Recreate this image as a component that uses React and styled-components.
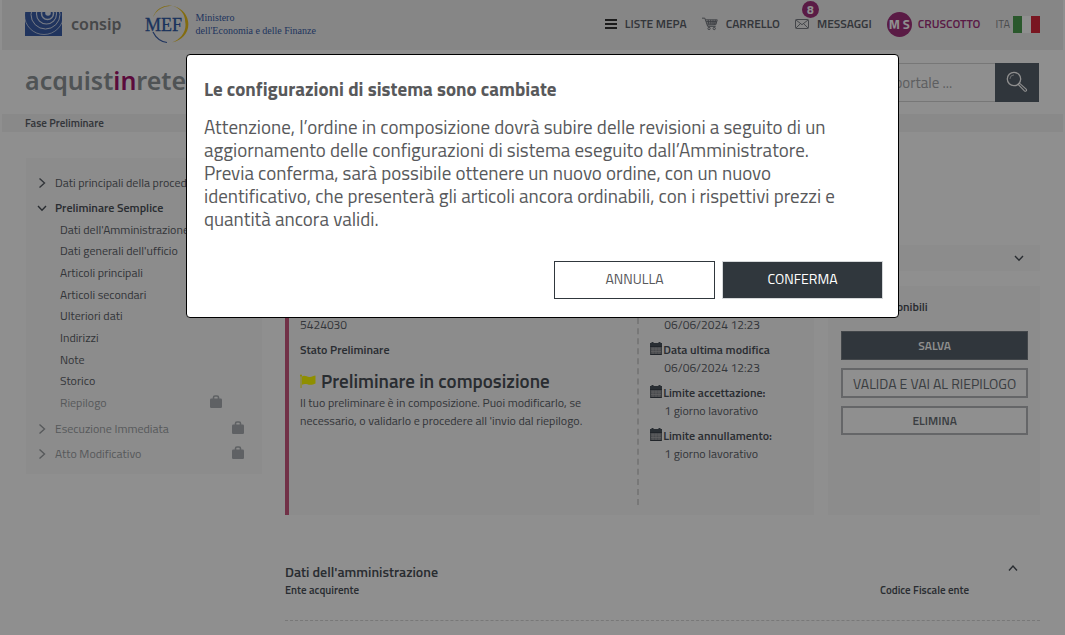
import styled, { createGlobalStyle } from 'styled-components';

const subItems = [
  { label: "Dati dell'Amministrazione" },
  { label: "Dati generali dell'ufficio" },
  { label: 'Articoli principali' },
  { label: 'Articoli secondari' },
  { label: 'Ulteriori dati' },
  { label: 'Indirizzi' },
  { label: 'Note' },
  { label: 'Storico' },
  { label: 'Riepilogo', locked: true },
];

const dates = [
  { label: 'Data creazione', value: '06/06/2024 12:23' },
  { label: 'Data ultima modifica', value: '06/06/2024 12:23' },
  { label: 'Limite accettazione:', value: '1 giorno lavorativo' },
  { label: 'Limite annullamento:', value: '1 giorno lavorativo' },
];

const message = [
  'Attenzione, l’ordine in composizione dovrà subire delle revisioni a seguito di un',
  'aggiornamento delle configurazioni di sistema eseguito dall’Amministratore.',
  'Previa conferma, sarà possibile ottenere un nuovo ordine, con un nuovo',
  'identificativo, che presenterà gli articoli ancora ordinabili, con i rispettivi prezzi e',
  'quantità ancora validi.',
];

const Chevron = ({ dir = 'right', size = 10 }) => {
  const paths = {
    right: 'M2.500 0.500l5 4.500-5 4.500',
    down: 'M1 3l4 4.200L9 3',
    up: 'M1 7.500l4-4.500 4 4.500',
  };
  return (
    <svg width={size} height={size} viewBox="0 0 10 10" fill="none" stroke="currentColor" strokeWidth="1.400" aria-hidden="true">
      <path d={paths[dir]} />
    </svg>
  );
};

const LockIcon = () => (
  <svg width="12" height="13" viewBox="0 0 12 13" aria-hidden="true">
    <path d="M3.500 4.500V2.600Q3.500 1 5 1h2q1.500 0 1.500 1.600v1.900" fill="none" stroke="#a9adb2" strokeWidth="1.600" />
    <rect x="0" y="3.600" width="12" height="9.400" rx="1.200" fill="#a9adb2" />
  </svg>
);

const CalendarIcon = () => (
  <svg width="12" height="13" viewBox="0 0 12 13" aria-hidden="true">
    <path d="M0 1h1.500V0h2v1h5V0h2v1H12v3H0z" fill="#4a525b" />
    <rect y="4" width="12" height="9" fill="#80858b" />
    <path d="M0 4.500h12M0 12.500h12" stroke="#3c434b" />
    <path d="M1 7h10M1 9.500h10M3 5.500v6.500M6 5.500v6.500M9 5.500v6.500" stroke="#b5b5b5" strokeWidth="0.600" />
    <path d="M.4 5v8M11.600 5v8" stroke="#5f646a" strokeWidth="0.800" />
  </svg>
);

const FlagIcon = () => (
  <svg width="16" height="14" viewBox="0 0 16 14" aria-hidden="true">
    <circle cx="1" cy="1.500" r="1" fill="#f8f200" />
    <path d="M.6 2h.9v12H.6z" fill="#f8f200" />
    <path d="M2 2.400c3-1.800 5 .9 8 .5 2-.2 3.500-1 5.500-1.400v8c-2 .9-3.500 1.300-5.500 1.200-3-.2-5-1.800-8 .1z" fill="#ffff00" />
  </svg>
);

const CartIcon = () => (
  <svg width="16" height="14" viewBox="0 0 17 14" fill="none" stroke="#6c7078" strokeWidth="1" aria-hidden="true">
    <path d="M0 .8h3L6 9.500h8.500M3.700 2.600h12.500L14.700 7.700 5.400 8M4.400 4.300h11.200M4.900 6h10.200M6.500 2.600l.9 5.300M9.200 2.600l.3 5.300M11.700 2.600v5.200M14.200 2.600l-.8 5.200" />
    <circle cx="7.500" cy="11.800" r="1.200" />
    <circle cx="13" cy="11.800" r="1.200" />
  </svg>
);

const MailIcon = () => (
  <svg width="14" height="10" viewBox="0 0 14 10" fill="none" stroke="#6c7078" strokeWidth="0.900" aria-hidden="true">
    <rect x=".5" y=".5" width="13" height="9" rx=".8" />
    <path d="M1 1l6 4.700L13 1M1 9l4.400-4.300M13 9L8.600 4.700" />
  </svg>
);

const SearchIcon = () => (
  <svg width="22" height="22" viewBox="0 0 22 22" fill="none" stroke="#fff" strokeWidth="1.300" aria-hidden="true">
    <circle cx="8" cy="8" r="6.700" />
    <path d="M3.900 8A4.200 4.200 0 0 1 8 3.900" strokeWidth=".6" />
    <path d="M12.200 13.500l1.300-1.300 6.600 6q.9 1 .1 1.700-.8.800-1.800 0z" strokeWidth="1.100" />
  </svg>
);

const ConsipMark = () => (
  <svg width="37" height="24" viewBox="0 0 37 24" aria-hidden="true">
    <defs>
      <clipPath id="consip-box"><rect width="37" height="24" /></clipPath>
    </defs>
    <rect width="37" height="24" fill="#3a5ea8" />
    <g clipPath="url(#consip-box)" fill="none" stroke="#d3dbec">
      <circle cx="23" cy="1" r="2.800" fill="#e4e9f4" stroke="none" />
      <circle cx="22.500" cy="1.500" r="6" strokeWidth="1.500" />
      <circle cx="21.500" cy="2" r="10" strokeWidth="1.100" />
      <circle cx="20.500" cy="2.500" r="14.500" strokeWidth="1" />
      <circle cx="19" cy="3" r="19.500" strokeWidth=".8" />
    </g>
  </svg>
);

const MefMark = () => (
  <svg width="44" height="40" viewBox="0 0 44 40" aria-hidden="true">
    <path d="M8 13.500A18.300 18.300 0 0 1 43 17c2 10-5 19-16 21.500C36 35 42 27 40.200 18A16.400 16.400 0 0 0 8 13.500z" fill="#eac11c" />
    <path d="M8 28c3 6 8 9.800 14 10.500" fill="none" stroke="#3a5ea8" strokeWidth="1.200" />
    <text x="0" y="27" fontFamily="'Liberation Serif', serif" fontSize="18" fill="#2f5aa5" stroke="#2f5aa5" strokeWidth=".3">MEF</text>
  </svg>
);

const App = () => (
  <>
    <GlobalStyle />
    <Page>
      <TopBar>
        <Logos>
          <ConsipMark />
          <ConsipName>consip</ConsipName>
          <MefMark />
          <MefName>
            Ministero<br />dell'Economia e delle Finanze
          </MefName>
        </Logos>
        <TopNav>
          <NavLink href="#liste"><Bars><i /><i /><i /></Bars>LISTE MEPA</NavLink>
          <NavLink href="#carrello"><CartIcon />CARRELLO</NavLink>
          <NavLink href="#messaggi">
            <MailWrap><MailIcon /><Badge>8</Badge></MailWrap>
            MESSAGGI
          </NavLink>
          <NavLink href="#cruscotto" $accent><Avatar>M S</Avatar>CRUSCOTTO</NavLink>
          <Language>ITA<ItalianFlag><i /><i /><i /></ItalianFlag></Language>
        </TopNav>
      </TopBar>

      <BrandBar>
        <Brand>acquist<b>in</b>retepa</Brand>
        <Search>
          <SearchInput type="text" aria-label="Cerca nel portale" placeholder="Cerca nel portale ..." />
          <SearchButton type="button" aria-label="Cerca"><SearchIcon /></SearchButton>
        </Search>
      </BrandBar>

      <Breadcrumb>Fase Preliminare</Breadcrumb>

      <Content>
        <Sidebar>
          <MenuItem><Chevron />Dati principali della procedura</MenuItem>
          <MenuItem $active><Chevron dir="down" />Preliminare Semplice</MenuItem>
          <SubMenu>
            {subItems.map((item) => (
              <SubItem key={item.label} $locked={item.locked}>
                {item.label}
                {item.locked && <LockIcon />}
              </SubItem>
            ))}
          </SubMenu>
          <MenuItem $locked><Chevron />Esecuzione Immediata<LockIcon /></MenuItem>
          <MenuItem $locked><Chevron />Atto Modificativo<LockIcon /></MenuItem>
        </Sidebar>

        <Main>
          <Strip><Chevron dir="down" /></Strip>
          <Cards>
            <SummaryCard>
              <Status>
                <Label>Numero Preliminare</Label>
                <Value>5424030</Value>
                <Label $spaced>Stato Preliminare</Label>
                <StatusTitle><FlagIcon />Preliminare in composizione</StatusTitle>
                <Value>
                  Il tuo preliminare è in composizione. Puoi modificarlo, se<br />
                  necessario, o validarlo e procedere all 'invio dal riepilogo.
                </Value>
              </Status>
              <Dates>
                {dates.map((d) => (
                  <div key={d.label}>
                    <DateLabel><CalendarIcon />{d.label}</DateLabel>
                    <DateValue>{d.value}</DateValue>
                  </div>
                ))}
              </Dates>
            </SummaryCard>
            <ActionsCard>
              <Label>Azioni disponibili</Label>
              <Actions>
                <ActionButton type="button" $primary>SALVA</ActionButton>
                <ActionButton type="button" $large>VALIDA E VAI AL RIEPILOGO</ActionButton>
                <ActionButton type="button">ELIMINA</ActionButton>
              </Actions>
            </ActionsCard>
          </Cards>

          <Section>
            <SectionHead>
              <SectionTitle>Dati dell'amministrazione</SectionTitle>
              <Chevron dir="up" />
            </SectionHead>
            <SectionRow>
              <span>Ente acquirente</span>
              <span>Codice Fiscale ente</span>
            </SectionRow>
          </Section>
        </Main>
      </Content>
    </Page>

    <Overlay>
      <Dialog role="dialog" aria-modal="true" aria-labelledby="dialog-title">
        <DialogTitle id="dialog-title">Le configurazioni di sistema sono cambiate</DialogTitle>
        <DialogText>
          {message.map((line) => <span key={line}>{line} </span>)}
        </DialogText>
        <DialogButtons>
          <DialogButton type="button">ANNULLA</DialogButton>
          <DialogButton type="button" $primary>CONFERMA</DialogButton>
        </DialogButtons>
      </Dialog>
    </Overlay>
  </>
);

const GlobalStyle = createGlobalStyle`
  * {
    box-sizing: border-box;
  }

  body {
    margin: 0;
    background: #fff;
    color: #5b6068;
    font-family: 'Titillium Web', Roboto, sans-serif;
    font-size: 12px;
    line-height: 18px;
  }

  button, input {
    font-family: inherit;
  }

  svg {
    display: block;
    flex-shrink: 0;
  }
`;

const Page = styled.div`
  padding: 0 2px;
`;

const TopBar = styled.header`
  display: flex;
  align-items: center;
  justify-content: space-between;
  height: 50px;
  padding: 0 23px 2px;
  background: #efefef;
`;

const Logos = styled.div`
  display: flex;
  align-items: center;
`;

const ConsipName = styled.span`
  margin: 0 23px 0 9px;
  color: #7d8083;
  font-family: 'Noto Sans', sans-serif;
  font-size: 16px;
  font-weight: 600;
`;

const MefName = styled.span`
  margin-left: 7px;
  color: #3a5ea8;
  font-family: 'Liberation Serif', serif;
  font-size: 10px;
  line-height: 13px;
`;

const TopNav = styled.nav`
  display: flex;
  align-items: center;
  gap: 15px;
`;

const NavLink = styled.a`
  display: flex;
  align-items: center;
  gap: ${({ $accent }) => ($accent ? 6 : 8)}px;
  color: ${({ $accent }) => ($accent ? '#a1307c' : '#5b6068')};
  font-size: 12px;
  font-weight: 600;
  text-decoration: none;
`;

const Bars = styled.span`
  display: grid;
  gap: 2px;
  width: 12px;

  i {
    height: 2px;
    background: #333;
  }
`;

const MailWrap = styled.span`
  position: relative;
`;

const Badge = styled.span`
  position: absolute;
  top: -18px;
  left: 7px;
  width: 17px;
  height: 17px;
  border-radius: 50%;
  background: #a1307c;
  color: #fff;
  font-size: 12px;
  font-weight: 700;
  line-height: 17px;
  text-align: center;
`;

const Avatar = styled.span`
  width: 25px;
  height: 25px;
  border-radius: 50%;
  background: #a1307c;
  color: #fff;
  font-size: 13px;
  font-weight: 700;
  line-height: 25px;
  text-align: center;
  white-space: nowrap;
`;

const Language = styled.span`
  display: flex;
  align-items: center;
  gap: 3px;
  color: #85888c;
  font-size: 11px;
`;

const ItalianFlag = styled.span`
  display: grid;
  grid-template-columns: repeat(3, 9px);
  height: 17px;

  i:nth-child(1) { background: #4c9e4f; }
  i:nth-child(2) { background: #fff; }
  i:nth-child(3) { background: #d8283c; }
`;

const BrandBar = styled.div`
  display: flex;
  align-items: center;
  justify-content: space-between;
  height: 64px;
  padding: 0 24px 0 23px;
`;

const Brand = styled.div`
  padding-bottom: 4px;
  color: #8e9498;
  font-family: 'Noto Sans', sans-serif;
  font-size: 25px;
  font-weight: 600;

  b {
    color: #a3126c;
    font-weight: 600;
  }
`;

const Search = styled.div`
  display: flex;
  width: 260px;
`;

const SearchInput = styled.input`
  flex: 1;
  min-width: 0;
  height: 39px;
  padding: 0 12px 0 54px;
  border: 1px solid #d4d4d4;
  border-right: 0;
  background: #fff;
  font-size: 15px;

  &::placeholder {
    color: #a6a8ab;
  }
`;

const SearchButton = styled.button`
  display: flex;
  align-items: center;
  justify-content: center;
  width: 44px;
  height: 39px;
  padding: 0;
  border: 0;
  background: #57616b;
`;

const Breadcrumb = styled.div`
  padding: 0 23px;
  background: #f4f4f4;
  color: #5b6068;
  font-size: 11px;
  font-weight: 600;
`;

const Content = styled.div`
  display: flex;
  align-items: flex-start;
  gap: 23px;
  padding: 26px 23px 14px 24px;
`;

const Sidebar = styled.aside`
  flex: 0 0 236px;
  padding: 12px 0 8px;
  background: #fafafa;
`;

const MenuItem = styled.div`
  display: flex;
  align-items: center;
  gap: 8px;
  height: 25px;
  padding: 0 18px 0 11px;
  color: ${({ $active, $locked }) => ($locked ? '#9b9fa3' : $active ? '#4a5058' : '#5b6068')};
  font-weight: ${({ $active }) => ($active ? 600 : 400)};
  white-space: nowrap;

  svg + svg {
    margin: 0 0 2px auto;
  }
`;

const SubMenu = styled.div`
  display: grid;
  grid-auto-rows: 1fr;
  height: 195px;
  margin: -1px 0 2px;
`;

const SubItem = styled.div`
  display: flex;
  align-items: center;
  justify-content: space-between;
  padding: 0 40px 0 34px;
  color: ${({ $locked }) => ($locked ? '#9b9fa3' : '#5b6068')};
  white-space: nowrap;

  svg {
    margin-bottom: 4px;
  }
`;

const Main = styled.main`
  flex: 1;
  min-width: 0;
`;

const Strip = styled.div`
  display: flex;
  align-items: center;
  justify-content: flex-end;
  height: 26px;
  margin: 87px 0 15px;
  padding-right: 16px;
  background: #fafafa;
  color: #4a5058;
`;

const Cards = styled.div`
  display: grid;
  grid-template-columns: minmax(0, 5fr) minmax(0, 2fr);
  gap: 14px;
  height: 229px;
`;

const SummaryCard = styled.section`
  display: grid;
  grid-template-columns: minmax(0, 1fr) 177px;
  padding: 12px 0 10px 11px;
  border-left: 4px solid #c9587f;
  background: #fafafa;
`;

const Status = styled.div`
  white-space: nowrap;
`;

const Label = styled.div`
  margin-top: ${({ $spaced }) => ($spaced ? 7 : 0)}px;
  color: #4a5058;
  font-weight: 600;
`;

const Value = styled.div`
  color: #5b6068;
`;

const StatusTitle = styled.h2`
  display: flex;
  align-items: center;
  gap: 5px;
  margin: 10px 0 1px;
  color: #4a5058;
  font-size: 19px;
  font-weight: 600;
  line-height: 24px;
`;

const Dates = styled.div`
  display: flex;
  flex-direction: column;
  gap: 7px;
  padding-left: 11px;
  border-left: 2px dashed #d6d6d6;
`;

const DateLabel = styled.div`
  display: flex;
  align-items: center;
  gap: 1px;
  color: #4a5058;
  font-weight: 600;

  svg {
    margin-bottom: 3px;
  }
`;

const DateValue = styled.div`
  padding-left: 14px;
`;

const ActionsCard = styled.section`
  padding: 12px 12px 12px 13px;
  background: #fafafa;
`;

const Actions = styled.div`
  display: grid;
  gap: 8px;
  margin-top: 15px;
`;

const ActionButton = styled.button`
  height: ${({ $large }) => ($large ? 30 : 29)}px;
  padding: 0;
  border: ${({ $primary }) => ($primary ? '1px solid #777d84' : '2px solid #b4b6b9')};
  background: ${({ $primary }) => ($primary ? '#57616b' : '#fff')};
  color: ${({ $primary }) => ($primary ? '#fff' : '#6a6f75')};
  font-size: ${({ $large }) => ($large ? 14 : 12)}px;
  font-weight: ${({ $large }) => ($large ? 400 : 600)};
  white-space: nowrap;
`;

const Section = styled.section`
  margin-top: 48px;
  padding-bottom: 21px;
  border-bottom: 1px dashed #d6d6d6;
  color: #4a5058;
`;

const SectionHead = styled.div`
  display: flex;
  justify-content: space-between;
  padding-right: 22px;
`;

const SectionTitle = styled.h3`
  margin: 0;
  font-size: 14px;
  font-weight: 600;
  line-height: 18px;
`;

const SectionRow = styled.div`
  display: grid;
  grid-template-columns: minmax(0, 1fr) 160px;
  font-size: 11px;
  font-weight: 600;
`;

const Overlay = styled.div`
  position: fixed;
  inset: 0;
  padding: 54px 166px 0 186px;
  background: rgba(0, 0, 0, .44);
`;

const Dialog = styled.div`
  padding: 22px 15px 18px 17px;
  border: 1px solid #000;
  border-radius: 4px;
  background: #fff;
  color: #58595b;
`;

const DialogTitle = styled.h1`
  margin: 0 0 14px;
  font-size: 19px;
  font-weight: 700;
  line-height: 24px;
`;

const DialogText = styled.p`
  margin: 0 0 31px;
  font-size: 19px;
  font-weight: 400;
  line-height: 23px;

  span {
    display: block;
    white-space: nowrap;
  }
`;

const DialogButtons = styled.div`
  display: flex;
  justify-content: flex-end;
  gap: 7px;
`;

const DialogButton = styled.button`
  width: 161px;
  height: 38px;
  padding: 0 0 4px;
  border: 1px solid ${({ $primary }) => ($primary ? '#d5d8da' : '#30373d')};
  background: ${({ $primary }) => ($primary ? '#30373d' : '#fff')};
  color: ${({ $primary }) => ($primary ? '#fff' : '#58595b')};
  font-size: 14px;
`;

export default App;
